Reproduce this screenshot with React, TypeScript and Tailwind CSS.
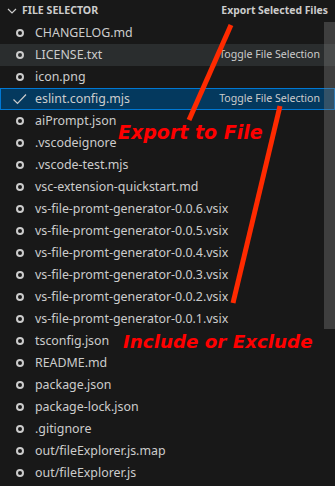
import { ReactNode } from "react";

const files = [
  "CHANGELOG.md",
  "LICENSE.txt",
  "icon.png",
  "eslint.config.mjs",
  "aiPrompt.json",
  ".vscodeignore",
  ".vscode-test.mjs",
  "vsc-extension-quickstart.md",
  "vs-file-promt-generator-0.0.6.vsix",
  "vs-file-promt-generator-0.0.5.vsix",
  "vs-file-promt-generator-0.0.4.vsix",
  "vs-file-promt-generator-0.0.3.vsix",
  "vs-file-promt-generator-0.0.2.vsix",
  "vs-file-promt-generator-0.0.1.vsix",
  "tsconfig.json",
  "README.md",
  "package.json",
  "package-lock.json",
  ".gitignore",
  "out/fileExplorer.js.map",
  "out/fileExplorer.js",
];

const HOVER = 1;
const SELECTED = 3;

const Circle = () => (
  <svg width="16" height="16" viewBox="0 0 16 16">
    <circle cx="8" cy="8" r="3" fill="none" stroke="#cccccc" strokeWidth="2" />
  </svg>
);

const Check = () => (
  <svg width="16" height="16" viewBox="0 0 16 16">
    <path d="M1.5 8.5 L5.5 12.5 L14 3.5" fill="none" stroke="#cccccc" strokeWidth="1.2" />
  </svg>
);

const Row = ({ name, index }: { name: string; index: number }) => {
  let cls = "border border-transparent";
  if (index === HOVER) cls = "bg-[#2a2d2e] border border-transparent";
  if (index === SELECTED) cls = "bg-[#04395e] border border-[#0078d4]";

  let action: ReactNode = null;
  if (index === HOVER || index === SELECTED) {
    action = (
      <span className="ml-auto pr-[14px] text-[10.6px] text-[#cccccc]">
        Toggle File Selection
      </span>
    );
  }

  return (
    <div className={`flex h-[22px] items-center pl-[11px] ${cls}`}>
      <span className="flex w-[16px] justify-center">
        {index === SELECTED ? <Check /> : <Circle />}
      </span>
      <span className="ml-[7px] whitespace-nowrap text-[12.4px] text-[#cccccc]">
        {name}
      </span>
      {action}
    </div>
  );
};

const App = () => {
  return (
    <div className="relative h-[486px] w-[335px] overflow-hidden bg-[#181818] font-['Noto_Sans',sans-serif]">
      {/* header */}
      <div className="flex h-[22px] items-center pl-[4px] pr-[7px]">
        <svg width="16" height="16" viewBox="0 0 16 16">
          <path d="M4 6 L8 10 L12 6" fill="none" stroke="#cccccc" strokeWidth="1.2" />
        </svg>
        <span className="ml-[2px] text-[10.6px] font-bold text-[#cccccc]">
          FILE SELECTOR
        </span>
        <span className="ml-auto text-[10.4px] font-bold text-[#cccccc]">
          Export Selected Files
        </span>
      </div>

      <div className="flex flex-col">
        {files.map((f, i) => (
          <Row key={f} name={f} index={i} />
        ))}
      </div>

      {/* scrollbar */}
      <div className="absolute right-0 top-[22px] h-[307px] w-[11px] bg-[#79797966]" />

      {/* annotations */}
      <svg className="absolute left-0 top-0" width="335" height="486">
        <line x1="231" y1="25" x2="189" y2="120" stroke="#ff2a00" strokeWidth="5" />
        <line x1="280" y1="106" x2="233" y2="303" stroke="#ff2a00" strokeWidth="5" />
      </svg>
      <div className="absolute left-[118px] top-[123px] text-[19px] font-bold italic leading-none text-[#ff0000] font-['DejaVu_Sans',sans-serif]">
        Export to File
      </div>
      <div className="absolute left-[123px] top-[333px] text-[18.3px] font-bold italic leading-none text-[#ff0000] font-['DejaVu_Sans',sans-serif]">
        Include or Exclude
      </div>
    </div>
  );
};

export default App;
